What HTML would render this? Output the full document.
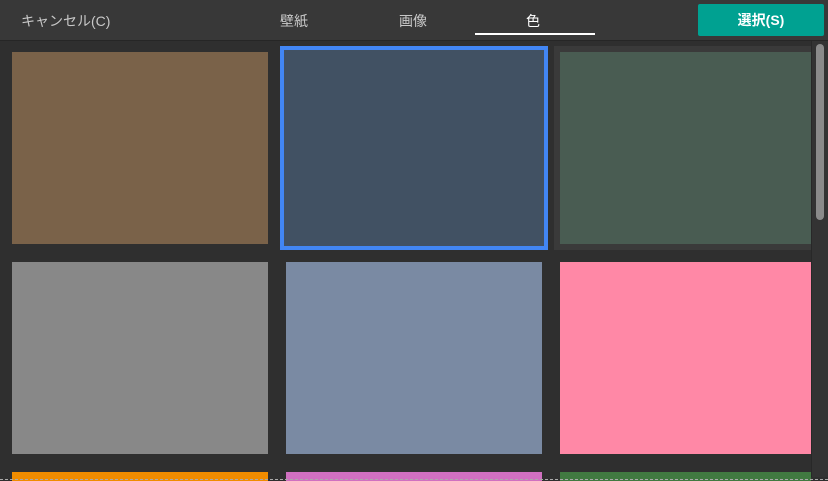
<!DOCTYPE html><html><head><style>
body{margin:0;width:828px;height:481px;background:#2f2f2f;overflow:hidden;font-family:"Liberation Sans","Noto Sans CJK JP",sans-serif;position:relative}
.hd{position:absolute;left:0;top:0;width:828px;height:40px;background:#383838;border-bottom:1px solid #262626}
.t{position:absolute;color:#c8c8c8;font-size:14px;top:11px}
.b{position:absolute;}
</style></head><body>
<div class="hd">
<div class="t" style="left:21px">キャンセル(C)</div>
<div class="t" style="left:280px">壁紙</div>
<div class="t" style="left:399px">画像</div>
<div class="t" style="left:526px;color:#fff">色</div>
<div class="b" style="left:475px;top:33px;width:120px;height:2px;background:#fff"></div>
<div class="b" style="left:698px;top:4px;width:126px;height:32px;background:#00a191;border-radius:2px;color:#fff;font-size:14px;line-height:32px;text-align:center;font-weight:bold">選択(S)</div>
</div>
<div class="b" style="left:12px;top:52px;width:256px;height:192px;background:#7a6249"></div>
<div class="b" style="left:280px;top:46px;width:260px;height:196px;border:4px solid #4286f4;background:#415163"></div>
<div class="b" style="left:554px;top:46px;width:257px;height:204px;background:#3a3a3a"></div>
<div class="b" style="left:560px;top:52px;width:251px;height:192px;background:#495c52"></div>
<div class="b" style="left:12px;top:262px;width:256px;height:192px;background:#888"></div>
<div class="b" style="left:286px;top:262px;width:256px;height:192px;background:#7a8aa3"></div>
<div class="b" style="left:560px;top:262px;width:251px;height:192px;background:#ff88a6"></div>
<div class="b" style="left:12px;top:472px;width:256px;height:9px;background:#f08c00"></div>
<div class="b" style="left:286px;top:472px;width:256px;height:9px;background:#d070c0"></div>
<div class="b" style="left:560px;top:472px;width:251px;height:9px;background:#417a41"></div>
<div class="b" style="left:0;top:479px;width:828px;height:0;border-top:1px dashed #aaa;z-index:5"></div>
<div class="b" style="left:811px;top:41px;width:17px;height:436px;background:#333;border-left:1px solid #282828"></div>
<div class="b" style="left:816px;top:44px;width:8px;height:176px;background:#8a8a8a;border-radius:4px"></div>
</body></html>
